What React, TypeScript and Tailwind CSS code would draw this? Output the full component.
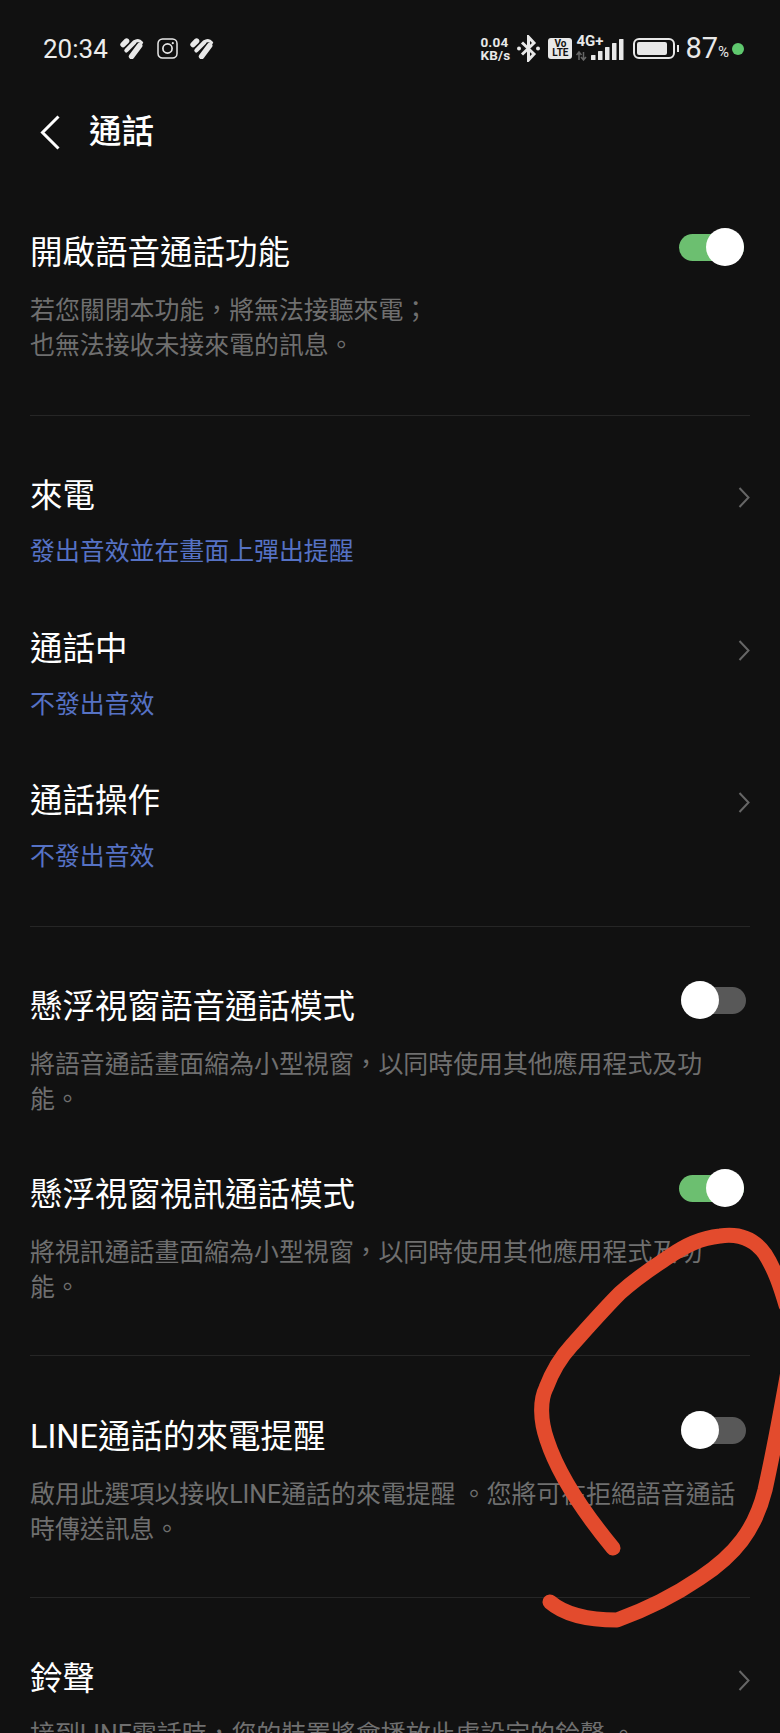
const CJK = { fontFamily: '"Roboto","Noto Sans CJK TC",sans-serif' };

function Heart() {
  return (
    <svg width="24" height="21" viewBox="0 0 24 21" fill="none" stroke="#e8e8e8">
      <path d="M3 6.6 L6.6 3" strokeWidth="5.4" strokeLinecap="round" />
      <path d="M6.4 12.4 L14.4 4.2" strokeWidth="4.2" strokeLinecap="round" />
      <path d="M11.6 18.4 L19.6 7.6" strokeWidth="5.6" strokeLinecap="round" />
      <path d="M15.5 3.2 Q19 1.5 21.6 4.6" strokeWidth="3" strokeLinecap="round" />
    </svg>
  );
}

function Instagram() {
  return (
    <svg width="21" height="21" viewBox="0 0 21 21" fill="none" stroke="#e8e8e8" strokeWidth="1.5">
      <rect x="1" y="1" width="19" height="19" rx="4.5" />
      <circle cx="10.5" cy="10.5" r="4.6" strokeWidth="1.7" />
      <circle cx="15.8" cy="5.2" r="1.1" fill="#e8e8e8" stroke="none" />
    </svg>
  );
}

function Bluetooth() {
  return (
    <svg width="25" height="27" viewBox="0 0 25 27" fill="none" stroke="#e8e8e8" strokeWidth="3">
      <path d="M6 7.5 L18 19 L12.5 25 V2 L18 8 L6 19.5" />
      <circle cx="3" cy="13.5" r="2" fill="#e8e8e8" stroke="none" />
      <circle cx="22" cy="13.5" r="2" fill="#e8e8e8" stroke="none" />
    </svg>
  );
}

function Signal() {
  return (
    <div className="relative w-[48px] h-[24px] shrink-0">
      <span className="absolute left-0 top-[-3px] text-[15px] leading-[15px] font-bold text-[#e8e8e8]">4G+</span>
      <svg className="absolute left-0 top-0" width="48" height="24" viewBox="0 0 48 24" fill="#e8e8e8">
        <path d="M3 23 V15 M0.5 18 L3 15 L5.5 18 M7.5 15 V23 M5 20 L7.5 23 L10 20" stroke="#666666" strokeWidth="1.5" fill="none" />
        <rect x="15" y="18" width="4.5" height="5" rx=".6" />
        <rect x="22" y="14" width="4.5" height="9" rx=".6" />
        <rect x="29" y="10" width="4.5" height="13" rx=".6" />
        <rect x="36" y="6" width="4.5" height="17" rx=".6" />
        <rect x="43" y="2" width="4.5" height="21" rx=".6" />
      </svg>
    </div>
  );
}

function StatusBar() {
  return (
    <div className="h-[96px] flex items-center justify-between pl-[43px] pr-[36px] pt-[1px]">
      <div className="flex items-center">
        <span className="text-[26px] leading-none text-[#ececec] w-[77px]">20:34</span>
        <Heart />
        <span className="w-[13px]" />
        <Instagram />
        <span className="w-[12px]" />
        <Heart />
      </div>
      <div className="flex items-center text-[#e8e8e8]">
        <div className="w-[36px] text-[13.5px] leading-[13px] font-bold tracking-[0.2px]">
          <div>0.04</div>
          <div>KB/s</div>
        </div>
        <Bluetooth />
        <div className="w-[24px] h-[21px] ml-[7px] rounded-[3px] bg-[#e8e8e8] text-[#111111] text-[10px] leading-[9px] font-bold text-center pt-[1px]">
          <div>Vo</div>
          <div>LTE</div>
        </div>
        <span className="w-[4px]" />
        <Signal />
        <span className="w-[9px]" />
        <div className="w-[42px] h-[21px] rounded-[6px] border-2 border-[#e8e8e8] p-[2px]">
          <div className="h-full w-[88%] bg-[#e8e8e8] rounded-[2px]" />
        </div>
        <div className="w-[2px] h-[7px] ml-[2px] bg-[#e8e8e8]" />
        <span className="text-[29px] leading-none ml-[6px]">87</span>
        <span className="text-[15px] leading-none mt-[8px]">%</span>
        <span className="w-[12px] h-[12px] rounded-full bg-[#5fc86e] ml-[3px]" />
      </div>
    </div>
  );
}

function Toggle({ on }: { on: boolean }) {
  if (on) {
    return (
      <div className="relative w-[65px] h-[27px] rounded-full bg-[#6cbf70] mr-[-25px] shrink-0">
        <span className="absolute right-0 top-[-6px] w-[38px] h-[38px] rounded-full bg-white" />
      </div>
    );
  }
  return (
    <div className="relative w-[65px] h-[27px] rounded-full bg-[#585858] mr-[-27px] shrink-0">
      <span className="absolute left-0 top-[-6px] w-[38px] h-[38px] rounded-full bg-white" />
    </div>
  );
}

function ToggleRow({ title, lines, on, mt, tp }: { title: string; lines: string[]; on: boolean; mt: string; tp: string }) {
  return (
    <div className={mt}>
      <div className="flex items-start justify-between">
        <div className="text-[32.5px] leading-[44px] text-white">{title}</div>
        <div className={`pr-[31px] ${tp}`}>
          <Toggle on={on} />
        </div>
      </div>
      <div className="mt-[18px] text-[24.9px] leading-[35px] text-[#6f6f6f]">
        {lines.map((l) => (
          <div key={l} className="whitespace-nowrap">
            {l}
          </div>
        ))}
      </div>
    </div>
  );
}

function Chevron() {
  return (
    <svg width="12" height="21" viewBox="0 0 12 21" fill="none" stroke="#666666" strokeWidth="2">
      <path d="M1.5 1 L10.5 10.5 L1.5 20" />
    </svg>
  );
}

function NavRow({ title, sub, mt, blue }: { title: string; sub: string; mt: string; blue?: boolean }) {
  return (
    <div className={mt}>
      <div className="flex items-center justify-between">
        <div className="text-[32.5px] leading-[44px] text-white">{title}</div>
        <div className="pt-[2px]">
          <Chevron />
        </div>
      </div>
      <div className={`mt-[16px] text-[24.9px] leading-[35px] whitespace-nowrap ${blue ? "text-[#5672c4]" : "text-[#6f6f6f]"}`}>
        {sub}
      </div>
    </div>
  );
}

function Divider() {
  return <div className="h-[1px] bg-[#262626]" />;
}

export default function App() {
  return (
    <div className="relative w-[780px] h-[1733px] overflow-hidden bg-[#111111]" style={CJK}>
      <StatusBar />
      <div className="h-[72px] flex items-center pl-[40px]">
        <svg width="20" height="35" viewBox="0 0 20 35" fill="none" stroke="#ffffff" strokeWidth="3">
          <path d="M18.5 1.5 L2.5 17.5 L18.5 33.5" />
        </svg>
        <div className="ml-[29px] text-[32.5px] leading-[44px] font-medium text-white">通話</div>
      </div>
      <div className="px-[30px]">
        <ToggleRow
          mt="mt-[63px]"
          tp="pt-[3px]"
          title="開啟語音通話功能"
          on
          lines={["若您關閉本功能，將無法接聽來電；", "也無法接收未接來電的訊息。"]}
        />
        <div className="mt-[52px]">
          <Divider />
        </div>
        <NavRow mt="mt-[58px]" title="來電" sub="發出音效並在畫面上彈出提醒" blue />
        <NavRow mt="mt-[58px]" title="通話中" sub="不發出音效" blue />
        <NavRow mt="mt-[57px]" title="通話操作" sub="不發出音效" blue />
        <div className="mt-[52px]">
          <Divider />
        </div>
        <ToggleRow
          mt="mt-[58px]"
          tp="pt-[2px]"
          title="懸浮視窗語音通話模式"
          on={false}
          lines={["將語音通話畫面縮為小型視窗，以同時使用其他應用程式及功", "能。"]}
        />
        <ToggleRow
          mt="mt-[56px]"
          tp="pt-[2px]"
          title="懸浮視窗視訊通話模式"
          on
          lines={["將視訊通話畫面縮為小型視窗，以同時使用其他應用程式及功", "能。"]}
        />
        <div className="mt-[50px]">
          <Divider />
        </div>
        <ToggleRow
          mt="mt-[59px]"
          tp="pt-[2px]"
          title="LINE通話的來電提醒"
          on={false}
          lines={["啟用此選項以接收LINE通話的來電提醒 。您將可在拒絕語音通話", "時傳送訊息。"]}
        />
        <div className="mt-[50px]">
          <Divider />
        </div>
        <NavRow mt="mt-[59px]" title="鈴聲" sub="接到LINE電話時，您的裝置將會播放此處設定的鈴聲 。" />
      </div>
      <svg className="absolute left-0 top-0 pointer-events-none" width="780" height="1733" viewBox="0 0 780 1733" fill="none">
        <path
          d="M613 1548 C590 1520 560 1480 547 1440 C540 1420 540 1400 546 1388 C552 1372 560 1358 572 1345 C590 1325 605 1308 620 1293 C640 1275 655 1266 670 1256 C685 1246 700 1238 720 1236 C740 1233 755 1240 765 1254 C775 1270 780 1285 786 1305 M790 1360 C783 1400 775 1445 765 1490 C755 1530 735 1555 700 1578 C675 1595 650 1608 617 1620 C590 1620 565 1615 550 1602"
          stroke="#e34b2d"
          strokeWidth="15"
          strokeLinecap="round"
          strokeLinejoin="round"
        />
      </svg>
    </div>
  );
}
